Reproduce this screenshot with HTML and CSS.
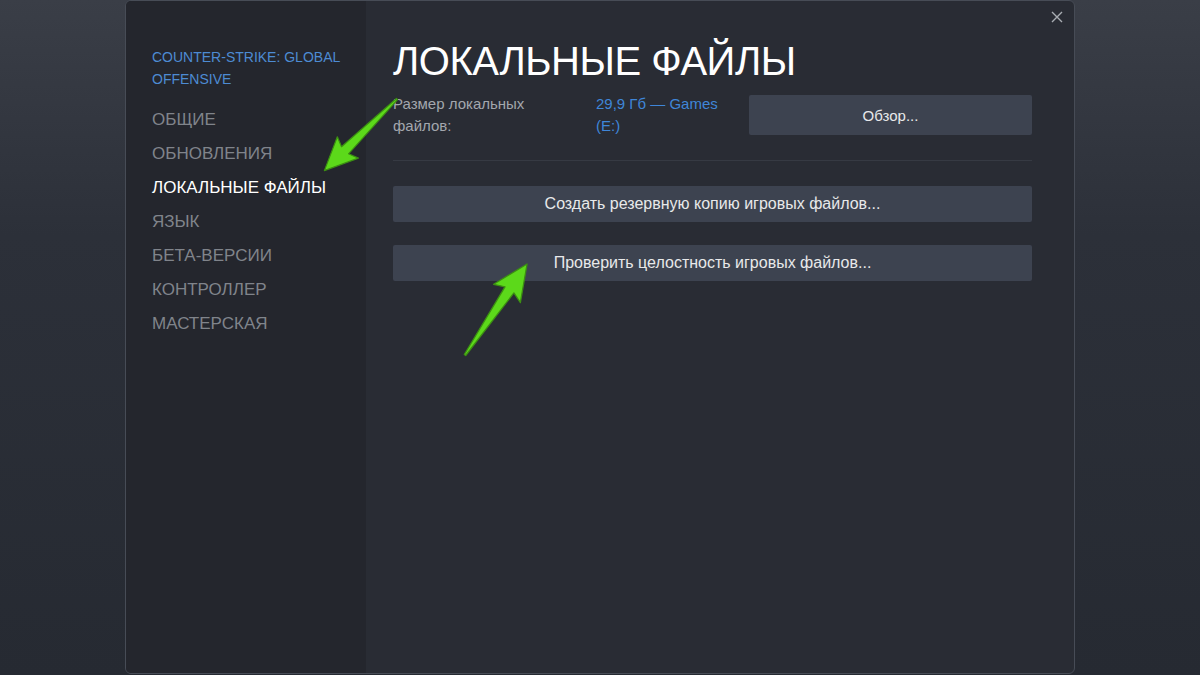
FILE: index.html
```html
<!DOCTYPE html>
<html lang="ru">
<head>
<meta charset="UTF-8">
<meta name="viewport" content="width=device-width, initial-scale=1.0">
<title>Свойства — Counter-Strike: Global Offensive</title>
<link rel="stylesheet" href="styles.css">
</head>
<body>
<div class="page">
  <div class="dialog">
    <div class="sidebar">
      <div class="game-title">COUNTER-STRIKE: GLOBAL OFFENSIVE</div>
      <ul class="nav">
        <li>ОБЩИЕ</li>
        <li>ОБНОВЛЕНИЯ</li>
        <li class="active">ЛОКАЛЬНЫЕ ФАЙЛЫ</li>
        <li>ЯЗЫК</li>
        <li>БЕТА-ВЕРСИИ</li>
        <li>КОНТРОЛЛЕР</li>
        <li>МАСТЕРСКАЯ</li>
      </ul>
    </div>

    <div class="content">
      <h1>Локальные файлы</h1>
      <div class="size-row">
        <div class="size-label">Размер локальных файлов:</div>
        <div class="size-value">29,9 Гб — Games (E:)</div>
        <button class="btn browse-btn">Обзор...</button>
      </div>
      <div class="divider"></div>
      <button class="btn wide-btn">Создать резервную копию игровых файлов...</button>
      <button class="btn wide-btn">Проверить целостность игровых файлов...</button>
    </div>

    <!-- close button -->
    <div class="close-btn">
      <svg width="12" height="12" viewBox="0 0 12 12">
        <path d="M1 1 L11 11 M11 1 L1 11" stroke="#a9adb3" stroke-width="1.4" fill="none"/>
      </svg>
    </div>
  </div>

  <!-- green pointer arrows drawn over the dialog -->
  <svg class="arrows" width="1200" height="675" viewBox="0 0 1200 675">
    <defs>
      <path id="arrow" d="M0 -0.8 L73 -5 L69 -15 L102 0 L69 15 L73 5 L0 0.8 Z"/>
    </defs>
    <use href="#arrow" class="arrow" transform="translate(397 99) rotate(135.4) scale(1.0)"/>
    <use href="#arrow" class="arrow" transform="translate(465 355) rotate(-55.7) scale(1.08)"/>
  </svg>
</div>
</body>
</html>
```

FILE: styles.css
```css
body {
  margin: 0;
  font-family: "Liberation Sans", Arial, sans-serif;
  background-color: #262a32;
  overflow: hidden;
}

.page {
  position: relative;
  height: 675px;
  display: flex;
  justify-content: center;
  background: linear-gradient(180deg, #3a3e47 0%, #2c3039 35%, #262a32 100%);
}

.dialog {
  position: relative;
  width: 948px;
  height: 672px;
  display: flex;
  border: 1px solid #474c56;
  border-radius: 6px;
  overflow: hidden;
  background-color: #292c34;
}

/* left menu */
.sidebar {
  width: 240px;
  background-color: #24262d;
  padding: 45px 0 0 26px;
  box-sizing: border-box;
}

.game-title {
  font-size: 14px;
  line-height: 22px;
  color: #4d8bd3;
  width: 205px;
}

.nav {
  list-style-type: none;
  margin: 13px 0 0;
  padding: 0;
}

.nav li {
  font-size: 17px;
  line-height: 34px;
  color: #80848b;
}

.nav li.active {
  color: #ffffff;
}

/* right panel */
.content {
  flex: 1;
  padding: 40px 42px 0 27px;
  display: flex;
  flex-direction: column;
}

h1 {
  margin: 0;
  font-size: 40px;
  line-height: 40px;
  font-weight: normal;
  text-transform: uppercase;
  letter-spacing: -0.45px;
  color: #ffffff;
}

.size-row {
  display: flex;
  align-items: flex-start;
  margin-top: 12px;
}

.size-label {
  width: 150px;
  margin-right: 53px;
  font-size: 15px;
  line-height: 22px;
  color: #a3a7ad;
}

.size-value {
  width: 140px;
  margin-right: 13px;
  font-size: 15px;
  line-height: 22px;
  color: #3f86d8;
}

.btn {
  border: none;
  border-radius: 2px;
  background-color: #3d4350;
  color: #e8e9ea;
  font-family: "Liberation Sans", Arial, sans-serif;
  font-size: 15px;
  cursor: pointer;
}

.browse-btn {
  flex: 1;
  height: 40px;
  margin-top: 2px;
}

.divider {
  height: 1px;
  background-color: #363a43;
  margin: 23px 0 25px;
}

.wide-btn {
  height: 36px;
  margin-bottom: 23px;
  font-size: 16px;
}

.close-btn {
  position: absolute;
  top: 8px;
  right: 11px;
}

.arrows {
  position: absolute;
  left: 0;
  top: 0;
  pointer-events: none;
}

.arrow {
  fill: #5cd91a;
  stroke: #3c8f12;
  stroke-width: 1.2;
  stroke-linejoin: round;
}
```
